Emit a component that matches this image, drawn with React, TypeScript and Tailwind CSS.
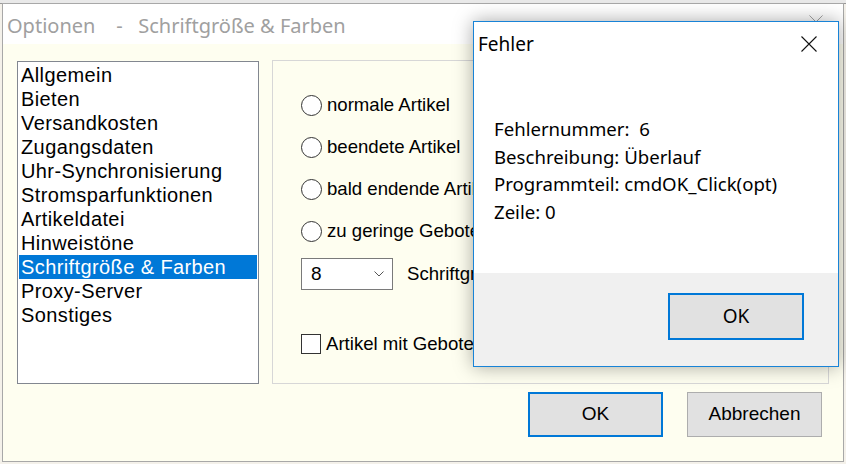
import React from "react";

const items = [
  "Allgemein",
  "Bieten",
  "Versandkosten",
  "Zugangsdaten",
  "Uhr-Synchronisierung",
  "Stromsparfunktionen",
  "Artikeldatei",
  "Hinweistöne",
  "Schriftgröße & Farben",
  "Proxy-Server",
  "Sonstiges",
];

const radios = ["normale Artikel", "beendete Artikel", "bald endende Artikel", "zu geringe Gebote"];

const sans = { fontFamily: '"Liberation Sans", Arial, sans-serif' };
const segoe = { fontFamily: '"Noto Sans", "Open Sans", sans-serif' };

function XIcon({ color, size }: { color: string; size: number }) {
  return (
    <svg width={size} height={size} viewBox="0 0 16 16">
      <path d="M0.5 0.5 L15.5 15.5 M15.5 0.5 L0.5 15.5" stroke={color} strokeWidth="1.1" fill="none" />
    </svg>
  );
}

export default function App() {
  return (
    <div className="relative w-[846px] h-[464px] overflow-hidden bg-[#f4f1ea]">
      {/* desktop strip behind */}
      <div className="absolute left-0 top-0 w-[846px] h-[4px] bg-[#e9e9e9] border-b border-[#9a9a9a]" />
      {/* main window */}
      <div className="absolute left-[2px] top-[3px] w-[842px] h-[459px] border border-[#a8a8a8] bg-[#fefef0] flex flex-col">
        <div className="h-[40px] bg-white flex items-center justify-between pl-[4px] pr-[20px] pt-[3px]">
          <span className="text-[20px] text-[#a0a0a0] whitespace-pre" style={segoe}>
            {"Optionen    -   Schriftgröße & Farben"}
          </span>
          <div className="mt-[-8px]">
            <XIcon color="#a0a0a0" size={14} />
          </div>
        </div>
        <div className="flex-1 flex flex-col pl-[14px] pr-[13px] pt-[16px]">
          <div className="flex items-start gap-[13px]">
            <div className="mt-[1px] w-[242px] h-[323px] border border-[#828790] bg-white pt-[1px] px-[1px]" style={sans}>
              {items.map((it) => (
                <div
                  key={it}
                  className={
                    "h-[24px] leading-[24px] pl-[2px] text-[20px] tracking-[0.4px] whitespace-nowrap " +
                    (it === "Schriftgröße & Farben" ? "bg-[#0078d7] text-white" : "text-black")
                  }
                >
                  {it}
                </div>
              ))}
            </div>
            <div className="w-[557px] h-[324px] border border-[#d7d7d7] pl-[28px] pt-[33px]" style={sans}>
              <div className="flex flex-col gap-[20px]">
                {radios.map((r) => (
                  <div key={r} className="flex items-center h-[22px] gap-[5px]">
                    <div className="w-[21px] h-[21px] rounded-full border border-[#333] bg-white" />
                    <span className="text-[18.6px] text-black whitespace-nowrap">{r}</span>
                  </div>
                ))}
              </div>
              <div className="flex items-center mt-[16px]">
                <div className="w-[92px] h-[32px] border border-[#7a7a7a] bg-white flex items-center justify-between pl-[9px] pr-[8px]">
                  <span className="text-[19px] text-black">8</span>
                  <svg width="10" height="6" viewBox="0 0 10 6">
                    <path d="M0.5 0.5 L5 5 L9.5 0.5" stroke="#555" strokeWidth="1" fill="none" />
                  </svg>
                </div>
                <span className="ml-[14px] text-[18.6px] text-black whitespace-nowrap">Schriftgröße</span>
              </div>
              <div className="flex items-center mt-[40px] gap-[5px]">
                <div className="w-[20px] h-[20px] border border-[#333] bg-white" />
                <span className="text-[18.6px] text-black whitespace-nowrap">Artikel mit Geboten</span>
              </div>
            </div>
          </div>
          <div className="flex justify-end gap-[24px] mt-[8px] pr-[8px]" style={sans}>
            <button className="w-[135px] h-[45px] border-2 border-[#0078d7] bg-[#e1e1e1] text-[19px] text-black">
              OK
            </button>
            <button className="w-[135px] h-[45px] border border-[#adadad] bg-[#e1e1e1] text-[19px] text-black">
              Abbrechen
            </button>
          </div>
        </div>
      </div>

      {/* error dialog */}
      <div
        className="absolute left-[473px] top-[21px] w-[366px] h-[346px] border border-[#1883d7] bg-white flex flex-col shadow-[0_0_18px_rgba(0,0,0,0.35)]"
        style={segoe}
      >
        <div className="h-[44px] flex items-center justify-between pl-[4px] pr-[21px]">
          <span className="text-[19px] text-black">Fehler</span>
          <XIcon color="#111" size={16} />
        </div>
        <div className="flex-1 pl-[20px] pt-[49px] text-[18.6px] leading-[27.5px] text-black">
          <div className="whitespace-pre">{"Fehlernummer:  6"}</div>
          <div>Beschreibung: Überlauf</div>
          <div>Programmteil: cmdOK_Click(opt)</div>
          <div>Zeile: 0</div>
        </div>
        <div className="h-[93px] bg-[#f0f0f0] flex justify-end items-start pt-[20px] pr-[34px]">
          <button className="w-[136px] h-[47px] border-2 border-[#0078d7] bg-[#e1e1e1] text-[19px] text-black">
            OK
          </button>
        </div>
      </div>
    </div>
  );
}
